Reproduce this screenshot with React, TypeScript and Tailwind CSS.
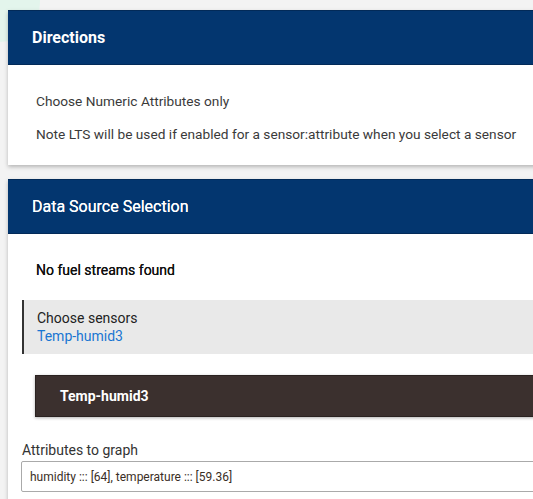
import React from "react";

const font = { fontFamily: "Roboto, 'Liberation Sans', sans-serif" };

function CardHeader({ title, bold }: { title: string; bold?: boolean }) {
  return (
    <div
      className={`flex h-[55px] items-center border-y border-[#022a58] bg-[#03366f] pl-6 text-[16px] text-white ${
        bold ? "font-bold" : "font-normal [text-shadow:0_0_0.5px_#fff]"
      }`}
    >
      {title}
    </div>
  );
}

export default function App() {
  return (
    <div
      className="relative min-h-[499px] overflow-hidden bg-[#f3f3f3] pl-2 pt-[10px] text-[#333]"
      style={font}
    >
      {/* soft mint blob in the corner */}
      <div className="absolute -left-[40px] -top-[38px] h-[80px] w-[80px] rounded-full bg-[#e3f5ec]" />

      {/* Directions card */}
      <div className="relative w-[580px] bg-white shadow-[0_2px_4px_rgba(0,0,0,0.25)]">
        <CardHeader title="Directions" bold />
        <div className="flex flex-col gap-[13px] pb-[21px] pl-7 pt-[26px] text-[13.7px] leading-5 text-[#3a3a3a]">
          <p>Choose Numeric Attributes only</p>
          <p>Note LTS will be used if enabled for a sensor:attribute when you select a sensor</p>
        </div>
      </div>

      {/* Data source card */}
      <div className="relative mt-[14px] min-h-[330px] w-[580px] bg-white shadow-[0_2px_4px_rgba(0,0,0,0.25)]">
        <CardHeader title="Data Source Selection" />
        <div className="flex flex-col">
          <p className="pl-7 pt-[26px] text-[14px] font-normal leading-5 text-[#111] [text-shadow:0_0_0.3px_#111]">
            No fuel streams found
          </p>

          <div className="ml-[14px] mt-[20px] flex h-[54px] flex-col justify-center border-l-2 border-[#333] bg-[#e9e9e9] pl-[13px] text-[14px] leading-[18px]">
            <span className="text-[#222]">Choose sensors</span>
            <span className="text-[#1976d2]">Temp-humid3</span>
          </div>

          <div className="ml-[27px] mt-[21px] flex h-[42px] items-center border border-[#2a2220] bg-[#3b302e] pl-6 text-[14px] font-bold text-white shadow-[0_1px_3px_rgba(0,0,0,0.3)]">
            Temp-humid3
          </div>

          <label className="ml-[14px] mt-[23px] text-[14px] leading-5 text-[#333]">
            Attributes to graph
          </label>
          <div className="ml-[13px] mt-[1px] flex h-[31px] items-center rounded-[2px] border border-[#aaa] bg-white pl-2 text-[12px] text-[#3a2e25]">
            humidity ::: [64], temperature ::: [59.36]
          </div>
        </div>
      </div>
    </div>
  );
}
